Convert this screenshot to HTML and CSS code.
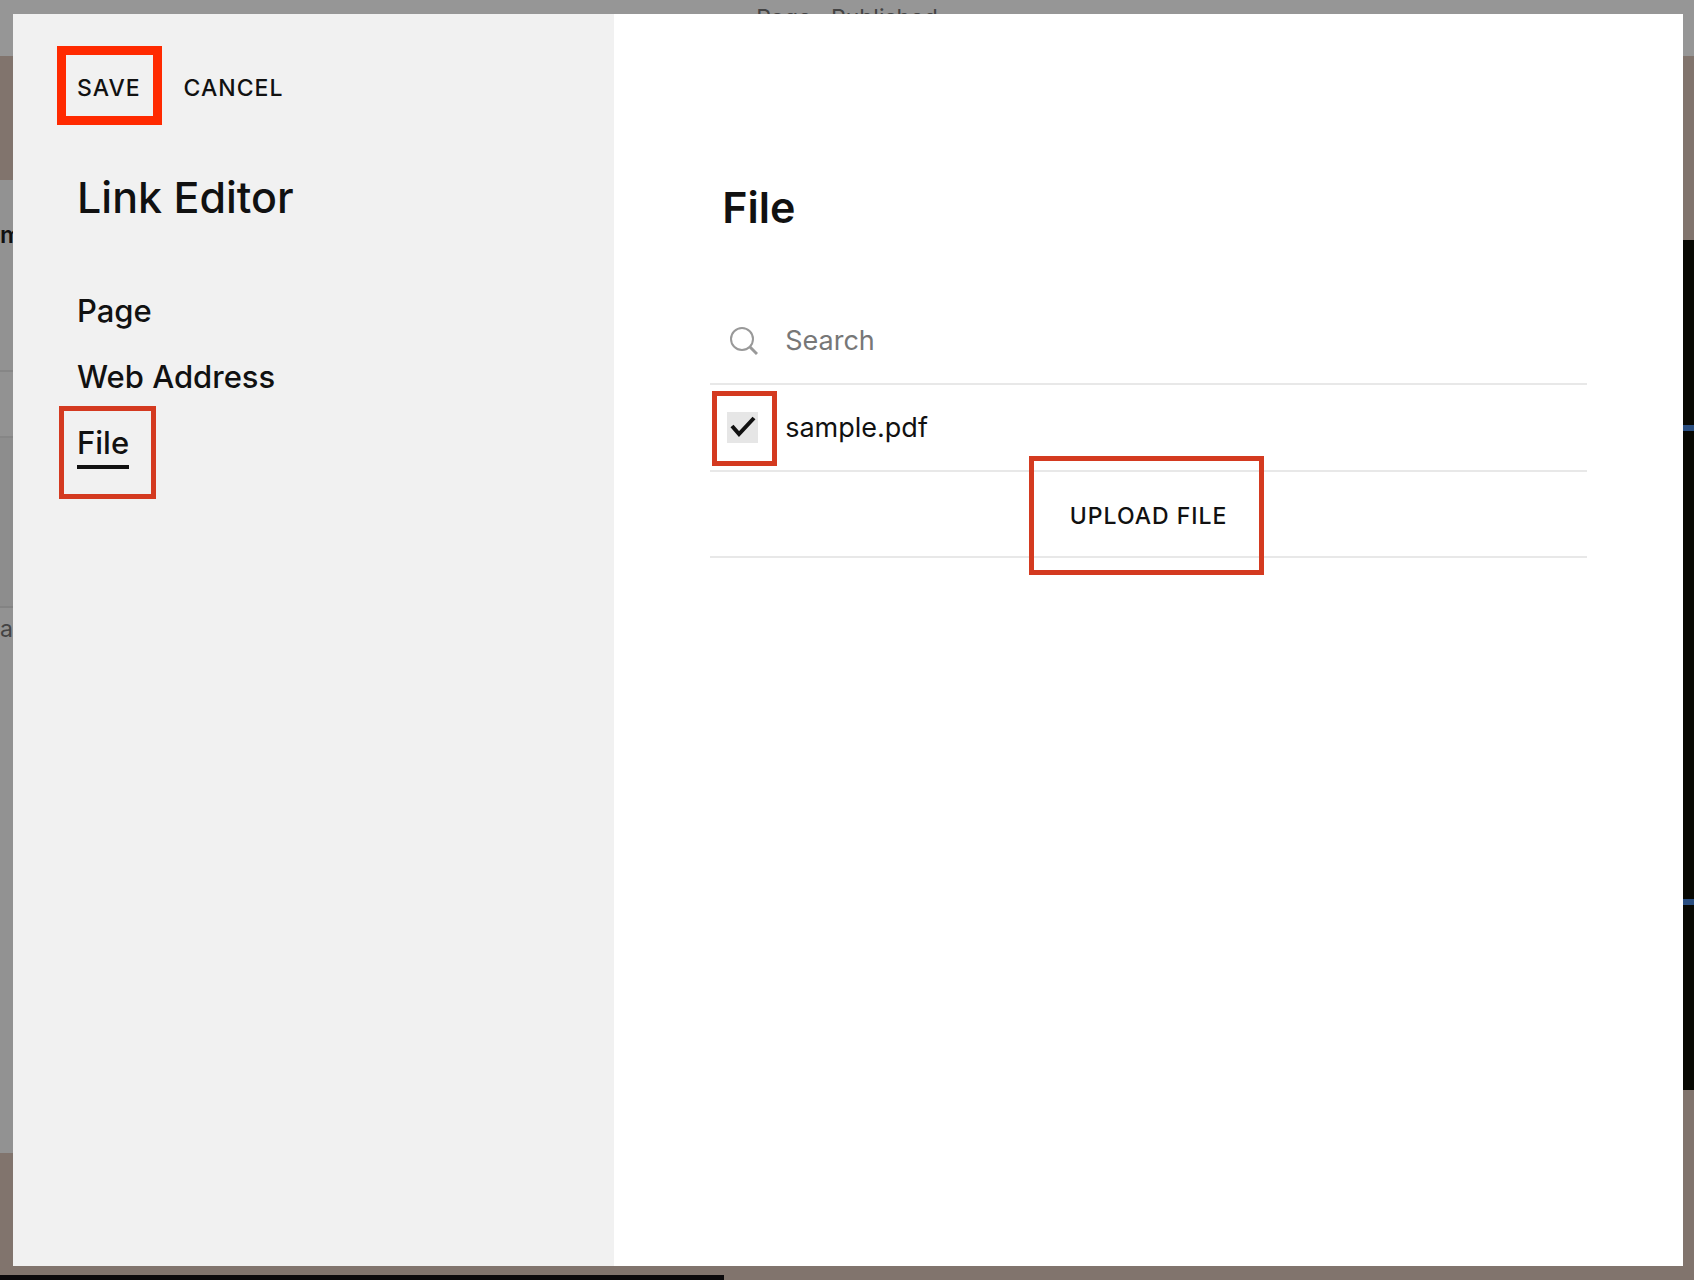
FILE: index.html
```html
<!DOCTYPE html>
<html lang="en">

<head>
    <meta charset="UTF-8">
    <meta name="viewport" content="width=device-width, initial-scale=1.0">
    <title>Link Editor</title>
    <link rel="stylesheet" href="styles.css">
</head>

<body>
    <!-- Dimmed page behind the dialog -->
    <div class="page" aria-hidden="true">
        <div class="page-bar">Page &middot; Published</div>
        <div class="page-body">
            <div class="page-left">
                <div class="banner"></div>
                <div class="panel">
                    <div class="panel-title">m</div>
                    <div class="panel-row"></div>
                    <div class="panel-box"></div>
                    <div class="panel-note">a</div>
                </div>
            </div>
            <div class="page-right">
                <div class="photo">
                    <div class="photo-line"></div>
                    <div class="photo-line"></div>
                </div>
            </div>
        </div>
        <div class="page-footer"></div>
    </div>

    <div class="modal" role="dialog" aria-label="Link Editor">
        <aside class="sidebar">
            <div class="actions">
                <button type="button" class="text-button marked mark-save">Save</button>
                <button type="button" class="text-button">Cancel</button>
            </div>
            <h1>Link Editor</h1>
            <nav>
                <a href="#page">Page</a>
                <a href="#web">Web Address</a>
                <a href="#file" class="active marked mark-nav">File</a>
            </nav>
        </aside>

        <main class="content">
            <h2>File</h2>

            <div class="row">
                <label for="search" class="row-icon" aria-label="Search">
                    <svg width="30" height="30" viewBox="0 0 30 30" fill="none" stroke="#999">
                        <circle cx="14" cy="13" r="11" stroke-width="2" />
                        <path d="M22 21L29 28" stroke-width="3" />
                    </svg>
                </label>
                <input type="text" id="search" class="search" placeholder="Search">
            </div>

            <div class="row">
                <span class="row-icon marked mark-check">
                    <input type="checkbox" id="sample" class="check" checked>
                    <svg class="tick" width="31" height="31" viewBox="0 0 31 31" fill="none" stroke="#111" stroke-width="4">
                        <path d="M5 14L12 22L27 6" />
                    </svg>
                </span>
                <label for="sample">sample.pdf</label>
            </div>

            <div class="row row-upload">
                <button type="button" class="text-button marked mark-upload">Upload File</button>
            </div>
        </main>
    </div>
</body>

</html>
```

FILE: styles.css
```css
* {
    box-sizing: border-box;
}

body {
    margin: 0;
    font-family: Inter, "Liberation Sans", sans-serif;
    color: #111;
    background-color: #fff;
}

h1,
h2 {
    margin: 0;
    font-size: 43px;
    line-height: 50px;
}

/* Page behind the dialog */
.page {
    display: flex;
    flex-direction: column;
    height: 100vh;
    margin-right: 4px;
    overflow: hidden;
    background-color: #81746d;
}

.page-bar {
    height: 56px;
    padding-top: 3px;
    text-align: center;
    font-size: 23px;
    line-height: 30px;
    color: #444;
    background-color: #969696;
}

.page-body {
    flex: 1;
    display: flex;
    justify-content: space-between;
}

.page-left {
    display: flex;
    flex-direction: column;
    width: 60px;
    margin-bottom: 122px;
}

.banner {
    height: 124px;
}

.panel {
    flex: 1;
    background-color: #929292;
}

.panel-title {
    height: 192px;
    padding-top: 40px;
    font-size: 24px;
    font-weight: 600;
    line-height: 30px;
    border-bottom: 2px solid #868686;
}

.panel-row {
    height: 66px;
    border-bottom: 2px solid #868686;
}

.panel-box {
    height: 170px;
    background-color: #8d8d8d;
    border-bottom: 2px solid #838383;
}

.panel-note {
    padding-top: 6px;
    font-size: 23px;
    line-height: 30px;
    color: #444;
}

.page-right {
    width: 60px;
    padding: 184px 0 185px;
}

.photo {
    display: flex;
    flex-direction: column;
    gap: 468px;
    height: 100%;
    padding-top: 185px;
    background-color: #080903;
}

.photo-line {
    height: 6px;
    background-color: #2a4e80;
}

.page-footer {
    width: 724px;
    height: 5px;
    background-color: #0b090b;
}

/* Dialog */
.modal {
    position: fixed;
    top: 14px;
    right: 15px;
    bottom: 14px;
    left: 13px;
    display: flex;
    background-color: #fff;
}

.sidebar {
    width: 36%;
    padding: 56px 64px;
    background-color: #f1f1f1;
}

.actions {
    display: flex;
    gap: 43px;
}

.text-button {
    padding: 0;
    border: none;
    background: none;
    font-family: inherit;
    font-size: 23px;
    font-weight: 500;
    line-height: 36px;
    letter-spacing: 1px;
    text-transform: uppercase;
    color: #111;
    cursor: pointer;
}

.sidebar h1 {
    margin-top: 66px;
    font-weight: 500;
}

nav {
    display: flex;
    flex-direction: column;
    align-items: flex-start;
    gap: 22px;
    margin-top: 67px;
}

nav a {
    font-size: 31px;
    font-weight: 500;
    line-height: 44px;
    color: #111;
    text-decoration: none;
}

nav .active {
    border-bottom: 4px solid #111;
}

.content {
    flex: 1;
    padding: 168px 96px;
}

.content h2 {
    padding-left: 12px;
    margin-bottom: 66px;
    font-weight: 600;
}

.row {
    display: flex;
    align-items: center;
    height: 87px;
    padding-left: 17px;
    font-size: 27px;
    border-bottom: 2px solid #e8e8e8;
}

.row-upload {
    justify-content: center;
    height: 86px;
    padding: 4px 0 0;
}

.row-icon {
    display: flex;
    justify-content: center;
    width: 31px;
    margin-right: 27px;
}

.search {
    flex: 1;
    padding: 0;
    border: none;
    outline: none;
    font: inherit;
    color: #111;
}

.search::placeholder {
    color: #777;
    opacity: 1;
}

.check {
    appearance: none;
    width: 31px;
    height: 31px;
    margin: 0;
    background-color: #e6e6e6;
}

.tick {
    position: absolute;
    top: 0;
    left: 0;
    visibility: hidden;
    pointer-events: none;
}

.check:checked + .tick {
    visibility: visible;
}

/* Red callout frames drawn over the controls */
.marked {
    position: relative;
}

.marked::after {
    content: "";
    position: absolute;
    border: 5px solid #d43a20;
    pointer-events: none;
}

.mark-save::after {
    inset: -24px -21px -19px -20px;
    border: 9px solid #ff2a00;
}

.mark-nav::after {
    inset: -15px -27px -34px -18px;
}

.mark-check::after {
    inset: -21px -19px -23px -15px;
}

.mark-upload::after {
    inset: -42px -37px -41px -41px;
}
```
